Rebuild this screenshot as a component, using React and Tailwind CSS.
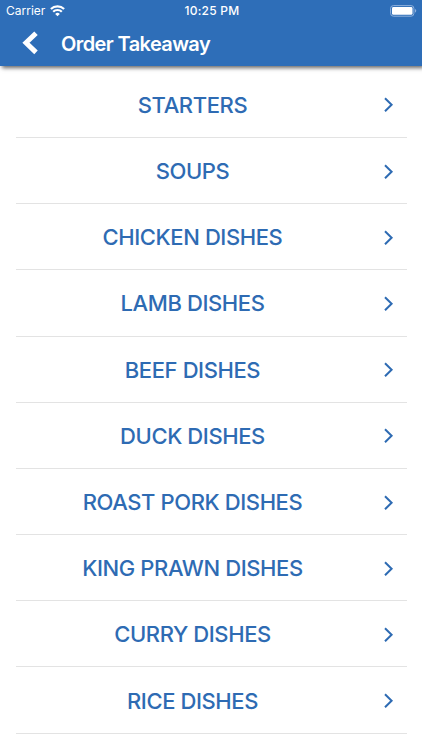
import React from "react";

const categories = [
  "STARTERS",
  "SOUPS",
  "CHICKEN DISHES",
  "LAMB DISHES",
  "BEEF DISHES",
  "DUCK DISHES",
  "ROAST PORK DISHES",
  "KING PRAWN DISHES",
  "CURRY DISHES",
  "RICE DISHES",
];

const WifiIcon = () => (
  <svg
    className="ml-[5px] h-[12px] w-[15px]"
    viewBox="0 0 15 12"
    fill="none"
    stroke="white"
    strokeWidth="2.2"
  >
    <path d="M0.9 4.1a9.3 9.3 0 0 1 13.2 0" />
    <path d="M3.2 6.8a6 6 0 0 1 8.6 0" />
    <path d="M7.5 11.2L5.2 8.9a3.3 3.3 0 0 1 4.6 0z" fill="white" stroke="none" />
  </svg>
);

const BatteryIcon = () => (
  <svg className="h-[12px] w-[27px]" viewBox="0 0 27 12" fill="none">
    <rect x="0.6" y="0.6" width="23.3" height="10.6" rx="2.8" stroke="#8fb1dd" />
    <rect x="2" y="2" width="20.5" height="7.8" rx="1.4" fill="white" />
    <path d="M25 4.1c1.7.6 1.7 3 0 3.6z" fill="#8fb1dd" />
  </svg>
);

const StatusBar = () => (
  <div className="grid h-[22px] grid-cols-3 items-center text-[12px] leading-none">
    <div className="flex items-center pl-[6px]">
      <span>Carrier</span>
      <WifiIcon />
    </div>
    <div className="pl-[2px] text-center font-medium tracking-[0.25px]">
      10:25 PM
    </div>
    <div className="flex justify-end pr-[5px]">
      <BatteryIcon />
    </div>
  </div>
);

const Header = () => (
  <header className="h-[66px] bg-[#2e6eb8] text-white shadow-[2px_2px_4px_rgba(0,0,0,0.6)]">
    <StatusBar />
    <div className="flex h-[42px] items-center">
      <button type="button" className="ml-[22px] w-[39px]">
        <svg className="h-[24px] w-[17px]" viewBox="0 0 17 24" fill="none">
          <path d="M14 2.2L4 11.8L14 21.4" stroke="white" strokeWidth="5" />
        </svg>
      </button>
      <h1 className="pt-[2px] text-[20px] font-semibold leading-none tracking-[-0.6px]">
        Order Takeaway
      </h1>
    </div>
  </header>
);

const CategoryRow = ({ name }) => (
  <li className="flex h-[66.2px] items-center border-b border-[#e3e3e3] text-[#2e6bb3]">
    <span className="flex-1 pl-[14px] pt-px text-center text-[22px] font-medium leading-none tracking-[-0.4px]">
      {name}
    </span>
    <svg
      className="ml-[28px] mr-[13px] h-[16px] w-[10px]"
      viewBox="0 0 10 16"
      fill="none"
    >
      <path d="M1 2.3L7.6 8.8L1 15.3" stroke="currentColor" strokeWidth="2" />
    </svg>
  </li>
);

const App = () => {
  return (
    <div className="h-[750px] overflow-hidden bg-white font-['Inter',sans-serif]">
      <Header />
      <ul className="mx-[15.5px] pt-[5.8px]">
        {categories.map((name) => (
          <CategoryRow key={name} name={name} />
        ))}
      </ul>
    </div>
  );
};

export default App;
